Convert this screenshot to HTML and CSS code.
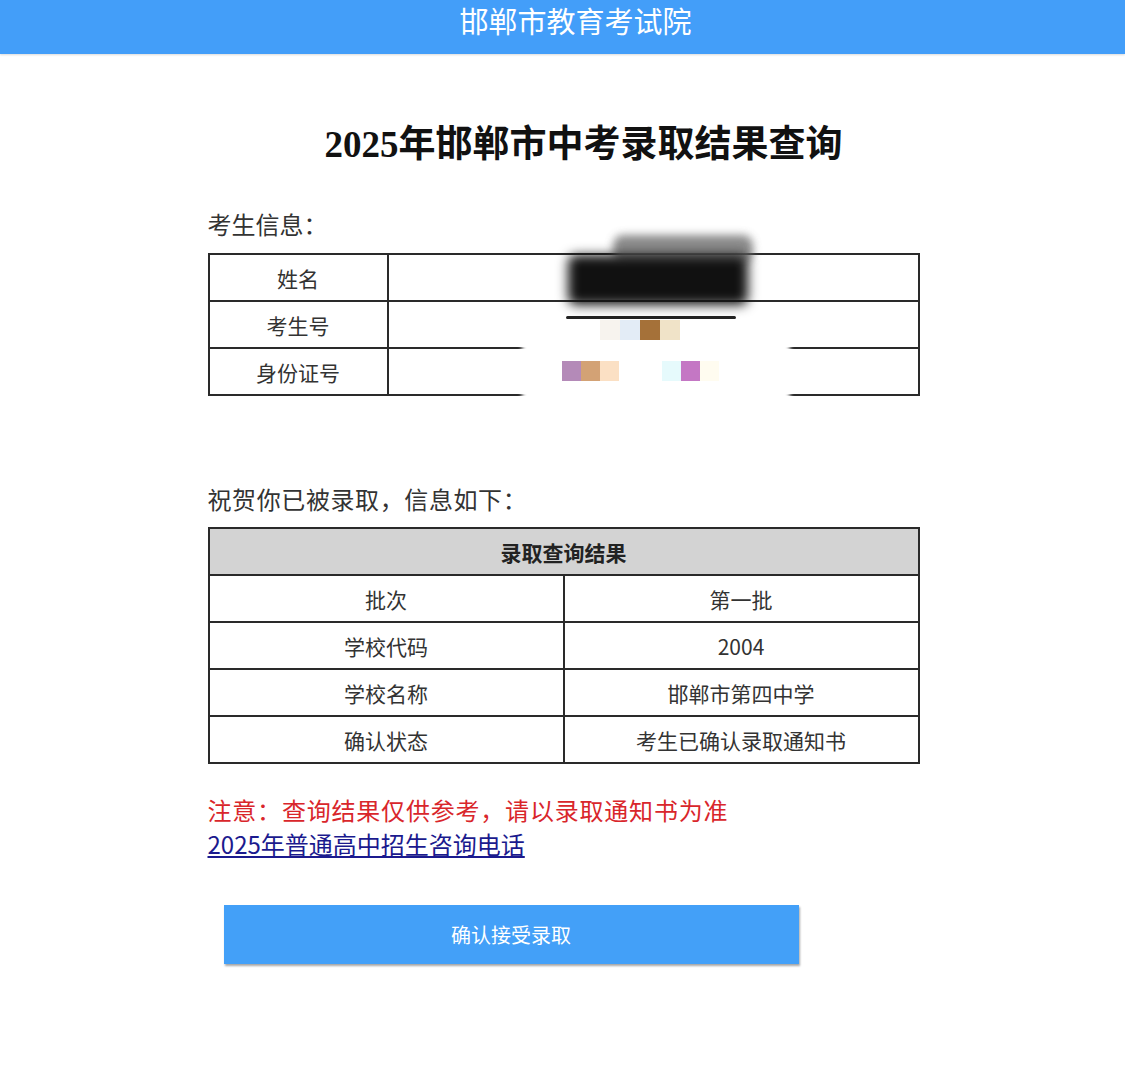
FILE: index.html
```html
<!DOCTYPE html>
<html lang="zh-CN">
<head>
  <meta charset="UTF-8">
  <meta name="viewport" content="width=device-width, initial-scale=1.0">
  <title>2025年邯郸市中考录取结果查询</title>
  <link rel="stylesheet" href="styles.css">
</head>
<body>
  <div class="header">邯郸市教育考试院</div>

  <div class="main">
    <h1 class="title">2025年邯郸市中考录取结果查询</h1>

    <div class="label">考生信息：</div>
    <div class="info-wrap">
      <table class="info">
        <tr>
          <td class="key">姓名</td>
          <td></td>
        </tr>
        <tr>
          <td class="key">考生号</td>
          <td></td>
        </tr>
        <tr>
          <td class="key">身份证号</td>
          <td></td>
        </tr>
      </table>
      <!-- blurred-out personal data -->
      <div class="mask mask-white"></div>
      <div class="mask mask-name-top"></div>
      <div class="mask mask-name"></div>
      <div class="mask mask-line"></div>
      <div class="pix pix-row2">
        <span style="background:#f7f3ee"></span><span style="background:#e3ecf6"></span><span style="background:#a57139"></span><span style="background:#f0e3c8"></span>
      </div>
      <div class="pix pix-row3a">
        <span style="background:#b48ab8"></span><span style="background:#d3a275"></span><span style="background:#fbe0c4"></span>
      </div>
      <div class="pix pix-row3b">
        <span style="background:#e6fafc"></span><span style="background:#c477c4"></span><span style="background:#fffcf0"></span>
      </div>
    </div>

    <div class="label label-result">祝贺你已被录取，信息如下：</div>
    <table class="result">
      <tr>
        <th colspan="2">录取查询结果</th>
      </tr>
      <tr>
        <td>批次</td>
        <td>第一批</td>
      </tr>
      <tr>
        <td>学校代码</td>
        <td>2004</td>
      </tr>
      <tr>
        <td>学校名称</td>
        <td>邯郸市第四中学</td>
      </tr>
      <tr>
        <td>确认状态</td>
        <td>考生已确认录取通知书</td>
      </tr>
    </table>

    <div class="notice">注意：查询结果仅供参考，请以录取通知书为准</div>
    <a class="phone" href="#">2025年普通高中招生咨询电话</a>

    <button class="confirm">确认接受录取</button>
  </div>
</body>
</html>
```

FILE: styles.css
```css
body {
  margin: 0;
  padding: 0;
  background: #fff;
  color: #222;
  font-family: "Noto Sans CJK SC", sans-serif;
}

.header {
  height: 54px;
  padding-left: 26px;
  background: #439ef9;
  color: #fff;
  text-align: center;
  font-size: 29px;
  line-height: 40px;
  box-shadow: 0 1px 2px rgba(0, 0, 0, 0.15);
}

.main {
  width: 712px;
  margin: 0 auto;
  padding: 69px 0 100px 2px;
}

.title {
  margin: 0;
  padding-left: 40px;
  text-align: center;
  font-family: "Liberation Serif", "Noto Sans CJK SC", serif;
  font-size: 37px;
  line-height: 44px;
  font-weight: bold;
  color: #111;
}

.label {
  margin-top: 42px;
  font-size: 24px;
  line-height: 30px;
  color: #333;
}

.label-result {
  margin-top: 88px;
  letter-spacing: 0.6px;
}

.info-wrap {
  position: relative;
  margin-top: 14px;
}

table {
  width: 100%;
  border-collapse: collapse;
  font-size: 21px;
  color: #333;
}

td, th {
  border: 2px solid #2a2a2a;
  height: 45px;
  padding: 0;
  text-align: center;
}

.info .key {
  width: 177px;
}

.result {
  margin-top: 13px;
}

.result td {
  width: 50%;
}

.result th {
  background: #d3d3d3;
  font-weight: bold;
  color: #222;
}

/* redaction marks over the personal data */
.mask {
  position: absolute;
}

.mask-white {
  left: 314px;
  top: 88px;
  width: 268px;
  height: 68px;
  background: #fff;
  filter: blur(2px);
}

.mask-name-top {
  left: 405px;
  top: -18px;
  width: 140px;
  height: 28px;
  background: #6e6e6e;
  border-radius: 10px;
  filter: blur(4px);
  opacity: 0.8;
}

.mask-name {
  left: 360px;
  top: 2px;
  width: 180px;
  height: 50px;
  background: #111;
  border-radius: 8px;
  filter: blur(6px);
}

.mask-line {
  left: 358px;
  top: 63px;
  width: 170px;
  height: 3px;
  background: #222;
  border-radius: 2px;
  filter: blur(0.6px);
}

.pix {
  position: absolute;
  display: flex;
}

.pix span {
  display: block;
  width: 20px;
  height: 20px;
}

.pix-row2 {
  left: 392px;
  top: 67px;
}

.pix-row3a {
  left: 354px;
  top: 108px;
}

.pix-row3a span,
.pix-row3b span {
  width: 19px;
}

.pix-row3b {
  left: 454px;
  top: 108px;
}

.notice {
  margin-top: 29px;
  font-size: 24px;
  line-height: 34px;
  color: #d9262b;
  letter-spacing: 0.8px;
}

.phone {
  display: inline-block;
  font-size: 24px;
  line-height: 34px;
  color: #1b1a8e;
  text-decoration: underline;
}

.confirm {
  display: block;
  width: 575px;
  height: 59px;
  margin: 44px 0 0 16px;
  border: none;
  background: #43a0f8;
  color: #fff;
  font-family: "Noto Sans CJK SC", sans-serif;
  font-size: 20px;
  cursor: pointer;
  box-shadow: 1px 2px 2px rgba(0, 0, 0, 0.35);
}
```
